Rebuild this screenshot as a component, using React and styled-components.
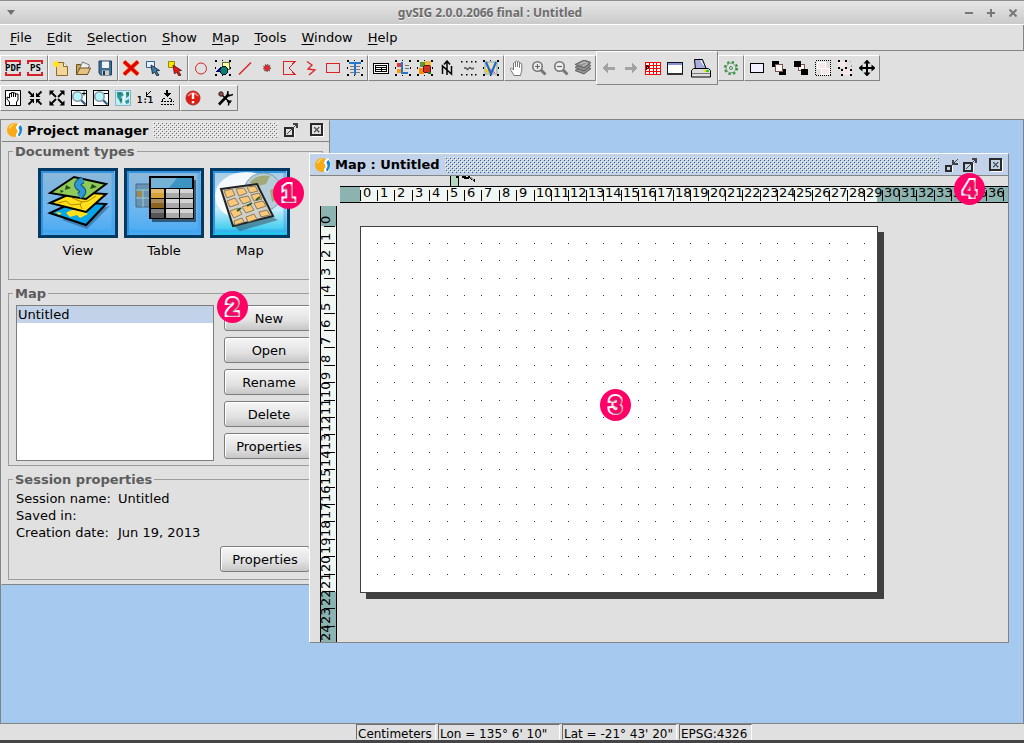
import React from "react";
import styled, { createGlobalStyle } from "styled-components";

const C = {
  face: "#e0e0e0",
  line: "#848484",
  desk: "#a6c9f0",
  select: "#c2d2e8",
  pink: "#ff0066",
  red: "#dc2222",
  teal: "#8db3b0",
  ruler: "#f1f6f2",
};

const Global = createGlobalStyle`
  * { box-sizing: border-box; }
  body {
    margin: 0;
    background: ${C.face};
    color: #000;
    font-family: "DejaVu Sans", Verdana, sans-serif;
    font-size: 13px;
    line-height: 17px;
  }
  button { font: inherit; color: inherit; }
`;

/* ---------- frame ---------- */
const Shell = styled.div`
  display: flex;
  flex-direction: column;
  min-height: 100vh;
  border-bottom: 3px solid #454548;
`;
const Caption = styled.header`
  display: flex;
  align-items: center;
  height: 25px;
  border-top: 1px solid #8f8c8c;
  border-bottom: 1px solid #fff;
  background: linear-gradient(#e6e6e6, #cacaca);
`;
const CaptionText = styled.h1`
  flex: 1;
  margin: 0;
  text-align: center;
  font: bold 12px/20px "Noto Sans", "Open Sans", sans-serif;
  color: #6c6c6c;
  text-shadow: 0 1px 0 #f2f2f2;
`;
const CaptionButton = styled.button`
  display: grid;
  place-items: center;
  width: 22px;
  height: 22px;
  padding: 0;
  border: 0;
  background: none;
`;
const CaptionButtons = styled.div`
  display: flex;
`;
const MenuBar = styled.nav`
  display: flex;
  height: 26px;
  padding: 0 2px;
  border-right: 1px solid ${C.line};
  border-bottom: 1px solid ${C.line};
`;
const MenuItem = styled.button`
  padding: 0 7px 0 8px;
  border: 0;
  background: none;
  line-height: 24px;
`;
const Mnemonic = styled.span`
  text-decoration: underline;
  text-underline-offset: 2px;
  text-decoration-thickness: 1px;
`;
const ToolRow = styled.div`
  display: flex;
  align-items: center;
  margin-bottom: ${(p) => (p.$last ? "8px" : "0")};
`;
const ToolGroup = styled.div`
  display: flex;
  align-items: center;
  height: ${(p) => (p.$tall ? "34px" : "26px")};
  padding: 1px;
  border: 1px solid;
  border-color: #fff ${C.line} ${C.line} #fff;
`;
const ToolButton = styled.button`
  display: grid;
  place-items: center;
  width: ${(p) => (p.$wide ? "30px" : "22px")};
  height: 22px;
  padding: 0;
  border: 0;
  background: none;
`;
const ToolGap = styled.span`
  width: 10px;
`;

/* ---------- desktop ---------- */
const Desktop = styled.main`
  position: relative;
  flex: 1;
  min-height: 604px;
  overflow: hidden;
  border-top: 1px solid ${C.line};
  border-left: 1px solid ${C.line};
  border-right: 1px solid ${C.line};
  background: ${C.desk};
`;
const Frame = styled.section`
  position: absolute;
  display: flex;
  flex-direction: column;
  overflow: hidden;
  border: 1px solid;
  border-color: ${(p) => (p.$active ? "#fff" : C.face)} ${C.line} ${C.line} ${(p) => (p.$active ? "#fff" : C.face)};
  background: ${C.face};
`;
const ManagerFrame = styled(Frame)`
  left: 0;
  top: 0;
  width: 329px;
  height: 465px;
`;
const MapFrame = styled(Frame)`
  left: 308px;
  top: 33px;
  width: 700px;
  height: 490px;
`;
const FrameBar = styled.header`
  display: flex;
  flex: none;
  align-items: center;
  gap: 4px;
  height: ${(p) => (p.$active ? "22px" : "21px")};
  padding: ${(p) => (p.$active ? "0 5px" : "0 5px 2px")};
  border-bottom: 1px solid ${C.line};
  background: ${(p) => (p.$active ? C.select : C.face)};
`;
const FrameTitle = styled.h2`
  margin: 0;
  font-size: 13px;
  line-height: 17px;
  white-space: nowrap;
`;
const dot = (c) => `conic-gradient(at 1px 1px, transparent 75%, ${c} 0)`;
const Bumps = styled.span`
  flex: 1;
  height: 16px;
  margin: 0 2px 0 1px;
  background-image: ${dot("#fff")}, ${dot("#fff")}, ${(p) => dot(p.$active ? "#44586f" : "#6e6e6e")},
    ${(p) => dot(p.$active ? "#44586f" : "#6e6e6e")};
  background-size: 4px 4px;
  background-position: 0 0, 2px 2px, 1px 1px, 3px 3px;
`;
const FrameButton = styled.button`
  display: block;
  width: 14px;
  height: 14px;
  margin-left: ${(p) => (p.$apart ? "8px" : "0")};
  padding: 0;
  border: 0;
  background: none;
  svg { display: block; }
`;

/* ---------- project manager ---------- */
const ManagerBody = styled.div`
  display: flex;
  flex-direction: column;
  gap: 5px;
  padding: 1px 6px 5px;
`;
const Group = styled.fieldset`
  min-width: 0;
  height: ${(p) => (p.$short ? "109px" : p.$tall ? "181px" : "137px")};
  margin: 0;
  padding: ${(p) => (p.$short ? "2px 7px" : p.$tall ? "3px 7px" : "8px 7px")};
  border: 1px solid #9c9c9c;
`;
const Legend = styled.legend`
  margin-left: -3px;
  padding: 0 2px;
  font-weight: bold;
  color: #5c5c5c;
  line-height: 17px;
`;
const DocTypes = styled.div`
  display: flex;
  gap: 6px;
  padding-left: 22px;
`;
const DocButton = styled.button`
  display: flex;
  flex-direction: column;
  align-items: center;
  gap: 4px;
  width: 80px;
  padding: 0;
  border: 0;
  background: none;
  svg { display: block; }
`;
const MapGroup = styled.div`
  display: flex;
  gap: 10px;
`;
const DocList = styled.ul`
  flex: none;
  width: 198px;
  height: 156px;
  margin: 0;
  padding: 0;
  border: 1px solid #7d7d7d;
  background: #fff;
  list-style: none;
`;
const DocItem = styled.li`
  padding: 0 1px;
  background: ${C.select};
`;
const ButtonColumn = styled.div`
  display: flex;
  flex-direction: column;
  gap: 6px;
`;
const PushButton = styled.button`
  width: 90px;
  height: 26px;
  padding: 0;
  border: 1px solid #7d7d7d;
  border-radius: 3px;
  background: linear-gradient(#f6f6f6, #e2e2e2 60%, #c6c6c6);
  box-shadow: inset 1px 1px 0 #fff;
`;
const Facts = styled.dl`
  display: grid;
  grid-template-columns: 102px 1fr;
  margin: 0;
`;
const Term = styled.dt`
  margin: 0;
`;
const Fact = styled.dd`
  margin: 0;
`;
const SessionActions = styled.div`
  display: flex;
  justify-content: flex-end;
  padding: 5px 5px 0;
`;

/* ---------- map layout ---------- */
const MapBody = styled.div`
  display: flex;
  flex: 1;
  flex-direction: column;
  min-height: 0;
`;
const CursorStrip = styled.div`
  flex: none;
  height: 10px;
  padding-left: 140px;
  svg { display: block; }
`;
const TopRuler = styled.svg`
  display: block;
  flex: none;
  width: calc(100% - 30px);
  height: 17px;
  margin-left: 30px;
`;
const Work = styled.div`
  display: flex;
  flex: 1;
  min-height: 0;
`;
const SideRuler = styled.svg`
  display: block;
  flex: none;
  width: 17px;
  height: calc(100% - 3px);
  margin: 3px 0 0 10px;
  overflow: visible;
`;
const Paper = styled.div`
  flex: none;
  width: 518px;
  height: 367px;
  margin: 23px;
  border: 1px solid #404040;
  background: #fff;
  box-shadow: 6px 6px 0 #404040;
  svg { display: block; }
`;

/* ---------- callouts ---------- */
const Callout = styled.span`
  position: absolute;
  left: ${(p) => p.$x}px;
  top: ${(p) => p.$y}px;
  width: 31px;
  height: 32px;
  border-radius: 50%;
  background: ${C.pink};
  color: ${C.pink};
  text-align: center;
  font: bold 23px/32px "Liberation Sans", Arial, sans-serif;
  -webkit-text-stroke: 4px #fff;
  paint-order: stroke fill;
  text-shadow: 1px 1px 2px #a0004a;
`;

/* ---------- status bar ---------- */
const StatusBar = styled.footer`
  display: flex;
  gap: 2px;
  height: 17px;
  padding-left: 356px;
  border-top: 1px solid ${C.line};
`;
const Status = styled.span`
  width: ${(p) => p.$w}px;
  border: 1px solid;
  border-color: #6f6f6f #fff transparent #6f6f6f;
  padding-left: 1px;
  line-height: 18px;
  font-size: 12px;
  white-space: nowrap;
`;

/* ---------- icons ---------- */
const Icon = ({ w = 16, h = 16, smooth, children }) => (
  <svg width={w} height={h} viewBox={`0 0 ${w} ${h}`} fill="none" shapeRendering={smooth ? "auto" : "crispEdges"} aria-hidden="true">
    {children}
  </svg>
);
const Handles = ({ c = "#000" }) => (
  <path fill={c} d="M0 0h2v2H0zM7 0h1v1H7zM14 0h2v2h-2zM0 7h1v2H0zM15 7h1v2h-1zM0 14h2v2H0zM7 15h1v1H7zM14 14h2v2h-2z" />
);
const smallText = { fontFamily: '"DejaVu Sans Mono", monospace', fontWeight: "bold", fontSize: 9 };
const Lens = ({ sign, boxed }) => (
  <>
    {boxed && <rect x=".5" y=".5" width="15" height="15" fill="#fff" stroke="#000" />}
    <path d="M9.500 9.500L14.500 14.500" stroke={boxed ? "#3a5f8c" : "#777"} strokeWidth={boxed ? "2.400" : "3"} />
    <circle cx="6.500" cy="6.500" r="4.700" fill={boxed ? "#b4f4fa" : "#eee"} stroke={boxed ? "#8a9aa8" : "#777"} strokeWidth="1.600" />
    {boxed ? (
      <path d={sign === "in" ? "M11 3.500h4M13 1.500v4" : "M11 3.500h4"} stroke="#000" />
    ) : (
      <path d={sign === "in" ? "M4 6.500h5M6.500 4v5" : "M4 6.500h5"} stroke="#666" strokeWidth="1.200" />
    )}
  </>
);
const handPath = "M5 15.500L1.500 9.500Q1 8 2.500 8L4.500 10V3Q5.500 1.500 6.500 3V7V1.500Q7.500 .2 8.500 1.500V7V2Q9.500 .8 10.500 2V7.500V3.500Q12 2.300 12.800 4V10L11.500 15.500z";
const Arrow = ({ fill, stroke = "#234" }) => <path d="M6 5L14.500 10.500L11 11L14 15L12 16L9.500 12L7.500 14z" fill={fill} stroke={stroke} />;

const icons = {
  pdf: <Icon><path d="M1 4V1h14v3M1 12v3h14v-3" stroke="#d8202a" strokeWidth="2" /><text x="0" y="11" fill="#000" {...smallText}>PDF</text></Icon>,
  ps: <Icon><path d="M1 4V1h14v3M1 12v3h14v-3" stroke="#d8202a" strokeWidth="2" /><text x="3" y="11" fill="#000" {...smallText}>PS</text></Icon>,
  fresh: <Icon smooth><path d="M3.500 2.500h7l4 4v9h-11z" fill="#f2d59a" stroke="#8a6a2a" /><path d="M10.500 2.500v4h4" fill="#fff" stroke="#8a6a2a" /><path d="M3 0l1 2 2-1-1 2 2 1-2 1 1 2-2-1-1 2-1-2-2 1 1-2-2-1 2-1-1-2 2 1z" fill="#ffe51a" /></Icon>,
  open: <Icon smooth><path d="M1.500 14.500V4.500h4l1 2h6v8z" fill="#c9a45c" stroke="#6e5320" /><path d="M4 10L7.500 2l7 3-2.500 6z" fill="#eee" stroke="#777" /><path d="M1.500 14.500L5 8h10.500l-3 6.500z" fill="#e4c284" stroke="#6e5320" /></Icon>,
  save: <Icon smooth><path d="M2 1h12.500v14H3.500L2 13z" fill="#3f6f94" stroke="#23415c" /><path d="M5 1.500h7V8H5z" fill="#f4f4f4" /><path d="M5 10.500h7V15H5z" fill="#ccc" /><path d="M6 11h2v4H6z" fill="#234" /></Icon>,
  cross: <Icon smooth><path d="M1 1.500L15 14.500M15 1.500L1 14.500" stroke="#ff5a00" strokeWidth="4.200" /><path d="M1 1.500L15 14.500M15 1.500L1 14.500" stroke="#e00000" strokeWidth="3" /></Icon>,
  pick: <Icon smooth><path d="M1.500 1.500h8v6h-8z" fill="#eef" stroke="#27648c" /><Arrow fill="#3a7ca6" /></Icon>,
  pickRed: <Icon smooth><path d="M1.500 1.500h6v6h-6z" fill="#ffe600" stroke="#8a8a00" /><Arrow fill="#e11" stroke="#622" /></Icon>,
  circle: <Icon smooth><circle cx="8" cy="8.500" r="5.500" stroke={C.red} /></Icon>,
  graphics: <Icon><Handles /><path d="M7 2h7v7H7z" fill="#ffffa0" stroke="#663" /><path d="M0 12l6-6 3 6z" fill="#008" /><circle cx="9" cy="10.500" r="4" fill="#088070" stroke="#013" /></Icon>,
  line: <Icon smooth><path d="M2 14.500L14 2.500" stroke={C.red} strokeWidth="1.500" /></Icon>,
  point: <Icon smooth><circle cx="8" cy="8" r="3" fill="#e02a2a" stroke="#555" strokeDasharray="1 1" strokeWidth="2" /><circle cx="8" cy="8" r="2.500" fill="#e02a2a" /></Icon>,
  polygon: <Icon><path d="M2.500 1.500h11.500L8 8l6 6.500H2.500z" stroke={C.red} /></Icon>,
  polyline: <Icon smooth><path d="M4 1.500l5 3.500-4 4 7 1-6 5" stroke={C.red} strokeWidth="1.300" /></Icon>,
  rect: <Icon><path d="M1.500 3.500h13v9h-13z" stroke={C.red} /></Icon>,
  text: <Icon><path d="M3 6.500h10M3 9.500h10M3 12.500h10" stroke="#777" /><path d="M2 3h12M8 3v12" stroke="#2277cc" strokeWidth="2" /><Handles /></Icon>,
  tableBox: <Icon><path d="M.5 3.500h15v10H.5z" fill="#fff" stroke="#000" /><path d="M2 5.500h12M2 7.500h12M2 9.500h12M2 11.500h12M8.500 7v5M2.500 5v7M13.500 5v7" stroke="#000" /></Icon>,
  legend: <Icon><Handles /><path d="M2 3h4v4H2z" fill="#e33" /><path d="M2 9h4v4H2z" fill="#f90" /><path d="M10 5h4M10 8h4" stroke="#777" /><path d="M7 2v11h6" stroke="#2277cc" strokeWidth="2" /></Icon>,
  picture: <Icon><path d="M2 8h5v6H2z" fill="#f80" /><path d="M3 2h5v5H3z" fill="#5a9a30" /><path d="M8 1h6v6H8z" fill="#f6b73c" /><circle cx="10" cy="9" r="4" fill="#c32" stroke="#611" /><path d="M11 12h3v2h-3z" fill="#272" /><Handles /></Icon>,
  north: <Icon smooth><path d="M3.500 14V6l9 8V6M8 15V1M5 4.500L8 1l3 3.500" stroke="#000" strokeWidth="1.500" /></Icon>,
  scale: <Icon smooth><path d="M3 8h2l1.500 1.500L9 7.500l2 1.500 2-1" stroke="#555" strokeWidth="1.400" /><path fill="#000" d="M0 1h1.500v1.500H0zM5 1h1.500v1.500H5zM10 1h1.500v1.500H10zM14 1h1.500v1.500H14zM0 14h1.500v1.500H0zM5 14h1.500v1.500H5zM10 14h1.500v1.500H10zM14 14h1.500v1.500H14z" /></Icon>,
  view: <Icon smooth><path d="M2 2h12v12H2z" fill="#e8dcc0" stroke="#8aa" /><path d="M3 12l4-3 5 4" stroke="#d4d" /><path d="M2 9l4 4" stroke="#fc0" strokeWidth="2" /><path d="M3 2l5 12 5-12" stroke="#1468c8" strokeWidth="2" /><Handles /></Icon>,
  hand: <Icon smooth><path d={handPath} fill="#fff" stroke="#777" /></Icon>,
  zoomIn: <Icon smooth><Lens sign="in" /></Icon>,
  zoomOut: <Icon smooth><Lens sign="out" /></Icon>,
  layers: <Icon smooth>{[7, 4, 1].map((y) => <path key={y} d={`M0 ${y + 3.5}L9 ${y - 1}L16 ${y + 1.5}L9 ${y + 7}z`} fill="#929292" stroke="#5e5e5e" />)}<path d="M5 4l5-2 2 2-4 2" stroke="#ccc" /></Icon>,
  back: <Icon><path d="M1 8l6-5v3.500h7v3H7V13z" fill="#a2a2a2" /></Icon>,
  forward: <Icon><path d="M15 8L9 3v3.500H2v3h7V13z" fill="#a2a2a2" /></Icon>,
  grid: <Icon><path d="M0 2h16v13H0z" fill="#f00" /><path d="M1 3h3v2H1zM5 3h3v2H5zM9 3h2v2H9zM12 3h3v2h-3zM1 6h3v2H1zM5 6h3v2H5zM9 6h2v2H9zM12 6h3v2h-3zM1 9h3v2H1zM5 9h3v2H5zM9 9h2v2H9zM12 9h3v2h-3zM1 12h3v2H1zM5 12h3v2H5zM9 12h2v2H9zM12 12h3v2h-3z" fill="#fff" /><path d="M1 5l3 2-3 3z" fill="#f80" stroke="#200" /></Icon>,
  pane: <Icon><path d="M.5 2.500h15v12H.5z" fill="#fff" stroke="#111" /><path d="M1 3h14v2H1z" fill="#8a93d8" /><path d="M0 14h16" stroke="#333" strokeWidth="2" /></Icon>,
  print: <Icon w={20} h={20} smooth><path d="M4.500 11.500L3.500 1.500h8l4 10z" fill="#a9aee0" stroke="#000" /><path d="M10 2l1 3 2 2" stroke="#fff" /><path d="M2.500 10.500h15l2 2v6.500H.5v-6.500z" fill="#ddd" stroke="#000" /><path d="M1 15.500h18" stroke="#777" /><path d="M13 12h2v2h-2z" fill="#fd0" /><path d="M15 12h3v2h-3z" fill="#3c3" /></Icon>,
  gear: <Icon smooth><circle cx="8" cy="8" r="6" stroke="#3f8f4a" strokeWidth="2.200" strokeDasharray="2.400 2.312" /><circle cx="8" cy="8" r="4.800" fill="#e0e0e0" stroke="#3f8f4a" strokeDasharray="2 .6" /><circle cx="8" cy="8" r="1.500" stroke="#3f8f4a" /></Icon>,
  plain: <Icon><path d="M1.500 3.500h13v9h-13z" fill="#f2f2ff" stroke="#000" /></Icon>,
  front: <Icon><path d="M1 1h7v6H1zM8 9h7v6H8z" fill="#000" /><path d="M4.500 4.500h7v7h-7z" fill="#fff5f0" stroke="#755" /></Icon>,
  behind: <Icon><path d="M5.500 4.500h6v6h-6z" fill="#fff5f0" stroke="#755" /><path d="M1 1h7v6H1zM8 9h7v6H8z" fill="#000" /></Icon>,
  group: <Icon><path d="M.5 .5h15v15H.5z" stroke="#000" strokeDasharray="1 1" /><path d="M2 2h8v6H2zM6 8h8v6H6z" fill="#f6e6e6" stroke="#fff" /></Icon>,
  ungroup: <Icon><path d="M1 1h8v6H1zM5 9h9v6H5z" fill="#f6e6e6" /><path d="M1 0h2v2H1zM8 0h2v2H8zM1 7h2v2H1zM8 7h2v2H8zM4 9h2v2H4zM13 9h2v2h-2zM4 14h2v2H4zM13 14h2v2h-2z" fill="#000" /><path d="M13 1v1M14 5v2" stroke="#999" /></Icon>,
  move: <Icon smooth><path d="M8 1v14M1 8h14" stroke="#000" strokeWidth="2" /><path d="M8-.5l3.500 4h-7zM8 16.500l3.500-4h-7zM-.5 8l4-3.500v7zM16.500 8l-4-3.500v7z" fill="#000" /></Icon>,
  pan: <Icon smooth><path d="M.5 .5h15v15H.5z" fill="#fff" stroke="#000" /><path d="M4.500 15V12L2 9V7l2.500 1V3.500h2V7M6.500 6V2.500h2V7M8.500 3h2v4M10.500 4h2.500v6l-1.500 2v3" stroke="#000" /></Icon>,
  shrink: <Icon smooth><path d="M1.500 1.500l4 4M14.500 1.500l-4 4M1.500 14.500l4-4M14.500 14.500l-4-4" stroke="#000" strokeWidth="1.800" /><path d="M7 7V2.500L2.500 7zM9 7h4.500L9 2.500zM7 9H2.500L7 13.500zM9 9v4.500L13.500 9z" fill="#000" /></Icon>,
  extend: <Icon smooth><path d="M2 2l5 5M14 2L9 7M2 14l5-5M14 14L9 9" stroke="#000" strokeWidth="1.800" /><path d="M.5 .5h5l-5 5zM15.500 .5v5l-5-5zM.5 15.500v-5l5 5zM15.500 15.500h-5l5-5z" fill="#000" /></Icon>,
  boxIn: <Icon smooth><Lens boxed sign="in" /></Icon>,
  boxOut: <Icon smooth><Lens boxed sign="out" /></Icon>,
  world: <Icon smooth><path d="M.5 .5h15v15H.5z" fill="#c4ecf6" stroke="#8ab4c0" /><path d="M2 2h5l2 3-3 2 2 3-2 4-2-4-2-3zM11 2h3v4l-3 2zM10 11l4-2v4l-3 1z" fill="#2a9aa0" /><path d="M4 3h2v2H4zM12 3h2v2h-2zM5 9h2v2H5z" fill="#2c7a3e" /><path d="M9 2l1 4-2 4 2 4" stroke="#fff" strokeWidth="1.500" /></Icon>,
  one: <Icon><text x="0" y="13" fill="#000" {...smallText}>1:1</text><path d="M9.500 2v4h4M10 5l4-4" stroke="#000" /></Icon>,
  fit: <Icon><path d="M8 0v4" stroke="#000" strokeWidth="2" /><path d="M4 3h8L8 7z" fill="#000" /><path d="M1.500 14.500h13M1.500 11.500h13M3.500 8.500v3M12.500 8.500v3M4 8.500h2M10 8.500h2" stroke="#000" strokeDasharray="2 1" /></Icon>,
  alert: <Icon smooth><circle cx="8" cy="8" r="7" fill="#e21b12" stroke="#a33" /><path d="M3 6q5-6 10 0" stroke="#ff8a80" strokeWidth="1.500" /><path d="M8 3v6M8 11v2.200" stroke="#fff" strokeWidth="2.400" /></Icon>,
  tools: <Icon smooth><path d="M2 14.500L12 4" stroke="#000" strokeWidth="2.600" /><path d="M5 5l8.500 8" stroke="#000" strokeWidth="1.600" /><path d="M11 1l-.5 3.500L12 6l4-1.500M10 11.500l4.500-.5M11.500 15.500l.5-5" stroke="#000" strokeWidth="1.500" /><circle cx="4" cy="4" r="2.200" fill="#a44" stroke="#222" /></Icon>,
};

const Tool = ({ id, wide }) => (
  <ToolButton type="button" $wide={wide} aria-label={id}>
    {icons[id]}
  </ToolButton>
);
const toolbars = [
  ["pdf", "ps"],
  ["fresh", "open", "save"],
  ["cross", "pick", "pickRed"],
  ["circle", "graphics", "line", "point", "polygon", "polyline", "rect", "text"],
  ["tableBox", "legend", "picture", "north", "scale", "view"],
  ["hand", "zoomIn", "zoomOut", "layers"],
  ["back", "forward", "grid", "pane", "print"],
  ["gear"],
  ["plain", "front", "behind", "group", "ungroup", "move"],
];
const navTools = ["pan", "shrink", "extend", "boxIn", "boxOut", "world", "one", "fit"];

const Logo = () => (
  <Icon smooth>
    <circle cx="7" cy="8" r="7" fill="#f9ab17" />
    <path d="M2 5q3-4 6-3q-3 1-5 5z" fill="#ffd56a" />
    <path d="M13 1Q18 6 13 15.500Q7.500 15 9.500 11.500Q12 9 9 6.500Q9 3 13 1z" fill="#fff" />
    <path d="M13.500 3Q17.500 7 12.500 14.500Q10.500 14 11.500 11.500Q13.500 9 11.500 6Q11.500 4 13.500 3z" fill="#1686d6" />
  </Icon>
);
const CloseGlyph = () => (
  <Icon w={14} h={14}>
    <path d="M2 13.500h11.500V2" stroke="#fff" />
    <path d="M1 1h11v11H1z" stroke="#2a2a2a" strokeWidth="2" />
    <path d="M4 4h1v1h1v1h1v-1h1v-1h1v1h-1v1h-1v1h1v1h1v1h-1v-1h-1v-1h-1v1h-1v1h-1v-1h1v-1h1v-1h-1v-1h-1z" fill="#222" stroke="#555" strokeWidth=".5" />
  </Icon>
);
const MaxGlyph = () => (
  <Icon w={14} h={14}>
    <path d="M10.500 6v8H1" stroke="#fff" />
    <path d="M1 5h8v8H1z" stroke="#2a2a2a" strokeWidth="2" />
    <path d="M3 11l9-9" stroke="#444" strokeWidth="1.200" />
    <path d="M9 1h4v4" stroke="#444" strokeWidth="2" />
  </Icon>
);
const MinGlyph = () => (
  <Icon w={14} h={14}>
    <path d="M7.500 8v6H1" stroke="#fff" />
    <path d="M1 8h5v5H1z" stroke="#2a2a2a" strokeWidth="2" />
    <path d="M13 1L8 6" stroke="#444" strokeWidth="1.200" />
    <path d="M8 2v4h5" stroke="#444" strokeWidth="2" />
  </Icon>
);

/* ---------- document type pictures ---------- */
const Tile = ({ id, from, mid, to, children }) => (
  <svg width="80" height="70" viewBox="0 0 80 70" aria-hidden="true">
    <defs>
      <linearGradient id={id} x1="0" y1="0" x2="0" y2="1">
        <stop offset="0" stopColor={from} />
        <stop offset=".6" stopColor={mid} />
        <stop offset="1" stopColor={to} />
      </linearGradient>
    </defs>
    <path d="M0 0h80v70H0z" fill="#003a63" />
    <path d="M3 3h74v64H3z" fill={`url(#${id})`} />
    <path d="M4 66V4h72" fill="none" stroke="#2f93e0" strokeWidth="2" />
    <path d="M5 63h70V5" fill="none" stroke="#3aa0ee" strokeWidth="3" opacity=".5" />
    {children}
  </svg>
);
const ViewArt = () => (
  <Tile id="tile-view" from="#8db8d8" mid="#6db6ee" to="#48aaf4">
    <path d="M24 52l26-9 22-5-23 23z" fill="#2b5f8c" opacity=".6" />
    <path d="M12 45l24-11 32 2-20 21z" fill="#06a6e8" stroke="#000" strokeWidth="2" />
    <path d="M28 45q6-5 16-3l6 4-8 4-3-3-7 2zM18 44l6 1-3 2z" fill="#ffe11a" />
    <path d="M12 35l24-11 32 2-20 18z" fill="#ffe11a" stroke="#000" strokeWidth="2" />
    <path d="M20 35l8-2 5 4 9-1 2 5M34 30l10 4 6-1 8-5M44 33l-2 4" fill="none" stroke="#b98700" />
    <path d="M12 25L36 9l32 7-20 15z" fill="#8fcb58" stroke="#000" strokeWidth="2" />
    <path d="M45 12q-9 4-3 8t-1 8" fill="none" stroke="#1b4e7a" strokeWidth="7" />
    <path d="M45 12q-9 4-3 8t-1 8" fill="none" stroke="#2e9ad4" strokeWidth="5" />
    <path d="M28 17l5 3-6 2zM54 16l5 3-7 2zM22 22l4 1-3 2z" fill="#234d1c" />
  </Tile>
);
const cols = [26, 41, 55];
const TableArt = () => (
  <Tile id="tile-table" from="#8db8d8" mid="#6db6ee" to="#48aaf4">
    <path d="M12 16h20v23H12z" fill="#6a93b2" stroke="#47698a" />
    <path d="M12 22h20M12 30h20M19 22v17" stroke="#9cc" />
    <path d="M13 23h5v6h-5z" fill="#a48a4a" />
    <path d="M28 12h44v42H28z" fill="#234" opacity=".7" />
    <path d="M25 8h45v43H25z" fill="#000" />
    <path d="M27 10h41v10H27z" fill="#3c93c4" />
    <path d="M27 10h26l-8 10H27z" fill="#8cc0dc" opacity=".7" />
    {[21, 31, 41].map((y, r) =>
      cols.map((x, c) => (
        <React.Fragment key={x + "-" + y}>
          <path d={`M${x + 1} ${y}h13v9h-13z`} fill={c ? "#a9a9a9" : ["#d8a23a", "#8a6420", "#555"][r]} />
          <path d={`M${x + 1} ${y}h13v4h-13z`} fill="#fff" opacity={c ? ".5" : ".25"} />
        </React.Fragment>
      ))
    )}
  </Tile>
);
const MapArt = () => (
  <Tile id="tile-map" from="#a6cbe4" mid="#c6ecfa" to="#18c4ea">
    <ellipse cx="36" cy="28" rx="31" ry="24" fill="#fff" opacity=".85" />
    <circle cx="53" cy="24" r="19" fill="#b4cdd8" stroke="#7e99a6" />
    <path d="M40 14q8-8 20-6l-4 8-8 2-3 5zM60 22l8-3v12l-6 3z" fill="#a3a878" />
    <path d="M24 58l36-10 8 4-38 11z" fill="#345" opacity=".5" />
    <path d="M11 21l36-5 16 32-40 10z" fill="#cfd0cc" stroke="#222" strokeWidth="2" />
    {[
      "M14 23l8-2 3 6-8 3z", "M26 21l8-1 3 5-8 3z", "M37 19l8-1 3 5-8 2z",
      "M17 33l8-3 4 6-9 3z", "M29 30l9-2 3 5-8 3z", "M41 27l8-2 3 6-8 2z",
      "M20 43l8-3 4 6-8 4z", "M32 39l8-3 4 6-8 3z", "M44 35l9-2 3 5-9 3z",
      "M24 53l8-3 2 4-9 3z", "M36 49l8-3 3 5-9 3z", "M49 44l8-2 3 5-9 2z",
    ].map((d) => <path key={d} d={d} fill="#fac878" stroke="#8c7a5a" />)}
    <path d="M27 43l4-3M37 38l5-3M46 32l4-3" stroke="#2d5a25" strokeWidth="2" />
  </Tile>
);

/* ---------- rulers and dot grid ---------- */
const STEP = 17.4;
const at = (i) => Math.floor(i * STEP);
const range = (n) => Array.from({ length: n }, (_, i) => i);

const HorizontalRuler = () => (
  <TopRuler shapeRendering="crispEdges">
    <rect width="100%" height="17" fill={C.teal} />
    <rect x="20" width="517" height="17" fill={C.ruler} />
    <rect width="100%" height="1" />
    <rect y="16" width="100%" height="1" />
    {range(38).map((i) => (
      <React.Fragment key={i}>
        <rect x={20 + at(i)} y="4" width="1" height="11" />
        {i < 37 && <text x={(i < 10 ? 23 : 22) + at(i)} y="11">{i}</text>}
      </React.Fragment>
    ))}
  </TopRuler>
);
const VerticalRuler = () => (
  <SideRuler shapeRendering="crispEdges">
    <rect width="17" height="100%" fill={C.teal} />
    <rect y="20" width="17" height="366" fill={C.ruler} />
    <rect width="1" height="100%" />
    <rect x="16" width="1" height="100%" />
    {range(25).map((i) => (
      <React.Fragment key={i}>
        <rect x="4" y={20 + at(i)} width="11" height="1" />
        <text transform={`translate(10 ${18 + at(i)}) rotate(-90)`}>{i}</text>
      </React.Fragment>
    ))}
  </SideRuler>
);
const DotGrid = () => (
  <svg width="516" height="365" shapeRendering="crispEdges" aria-hidden="true">
    <path
      fill="#333"
      d={range(29)
        .map((c) => range(20).map((r) => `M${at(c + 1) - 1} ${at(r + 1) - 1}h1v1h-1z`).join(""))
        .join("")}
    />
  </svg>
);

const menus = ["File", "Edit", "Selection", "Show", "Map", "Tools", "Window", "Help"];

export default function App() {
  return (
    <Shell>
      <Global />
      <Caption>
        <CaptionButton type="button" aria-label="Window menu">
          <Icon w={8} h={5} smooth><path d="M0 0h8L4 5z" fill="#707070" /></Icon>
        </CaptionButton>
        <CaptionText>gvSIG 2.0.0.2066 final : Untitled</CaptionText>
        <CaptionButtons>
          <CaptionButton type="button" aria-label="Minimize"><Icon w={8} h={8}><path d="M0 4h8" stroke="#777" strokeWidth="2" /></Icon></CaptionButton>
          <CaptionButton type="button" aria-label="Maximize"><Icon w={8} h={8}><path d="M0 4h8M4 0v8" stroke="#777" strokeWidth="2" /></Icon></CaptionButton>
          <CaptionButton type="button" aria-label="Close"><Icon w={8} h={8} smooth><path d="M.5 .5l7 7M7.500 .5l-7 7" stroke="#777" strokeWidth="2" /></Icon></CaptionButton>
        </CaptionButtons>
      </Caption>
      <MenuBar>
        {menus.map((m) => (
          <MenuItem type="button" key={m}><Mnemonic>{m[0]}</Mnemonic>{m.slice(1)}</MenuItem>
        ))}
      </MenuBar>
      <ToolRow>
        {toolbars.map((ids) => (
          <ToolGroup key={ids[0]} $tall={ids.includes("print")}>
            {ids.map((id) => <Tool key={id} id={id} wide={id === "print"} />)}
          </ToolGroup>
        ))}
      </ToolRow>
      <ToolRow $last>
        <ToolGroup>{navTools.map((id) => <Tool key={id} id={id} />)}</ToolGroup>
        <ToolGroup><Tool id="alert" /><ToolGap /><Tool id="tools" /></ToolGroup>
      </ToolRow>

      <Desktop>
        <ManagerFrame>
          <FrameBar>
            <Logo />
            <FrameTitle>Project manager</FrameTitle>
            <Bumps />
            <FrameButton type="button" aria-label="Maximize"><MaxGlyph /></FrameButton>
            <FrameButton type="button" $apart aria-label="Close"><CloseGlyph /></FrameButton>
          </FrameBar>
          <ManagerBody>
            <Group>
              <Legend>Document types</Legend>
              <DocTypes>
                <DocButton type="button"><ViewArt />View</DocButton>
                <DocButton type="button"><TableArt />Table</DocButton>
                <DocButton type="button"><MapArt />Map</DocButton>
              </DocTypes>
            </Group>
            <Group $tall>
              <Legend>Map</Legend>
              <MapGroup>
                <DocList role="listbox" aria-label="Map">
                  <DocItem role="option" aria-selected="true">Untitled</DocItem>
                </DocList>
                <ButtonColumn>
                  {["New", "Open", "Rename", "Delete", "Properties"].map((b) => (
                    <PushButton type="button" key={b}>{b}</PushButton>
                  ))}
                </ButtonColumn>
              </MapGroup>
            </Group>
            <Group $short>
              <Legend>Session properties</Legend>
              <Facts>
                <Term>Session name:</Term><Fact>Untitled</Fact>
                <Term>Saved in:</Term><Fact />
                <Term>Creation date:</Term><Fact>Jun 19, 2013</Fact>
              </Facts>
              <SessionActions><PushButton type="button">Properties</PushButton></SessionActions>
            </Group>
          </ManagerBody>
        </ManagerFrame>

        <MapFrame $active>
          <FrameBar $active>
            <Logo />
            <FrameTitle>Map : Untitled</FrameTitle>
            <Bumps $active />
            <FrameButton type="button" aria-label="Minimize"><MinGlyph /></FrameButton>
            <FrameButton type="button" aria-label="Maximize"><MaxGlyph /></FrameButton>
            <FrameButton type="button" $apart aria-label="Close"><CloseGlyph /></FrameButton>
          </FrameBar>
          <MapBody>
            <CursorStrip>
              <Icon w={28} h={10}>
                <path d="M1 0h7v10H1z" fill="#b6d8bc" />
                <path d="M.5 0v10M8.500 2v8" stroke="#000" />
                <path d="M6 0h3v2H6z" fill="#000" />
                <path d="M12 1h3v1h4M18 0l7 5" stroke="#000" strokeWidth="2" />
                <path d="M20 1l4 3" stroke="#999" />
              </Icon>
            </CursorStrip>
            <HorizontalRuler />
            <Work>
              <VerticalRuler />
              <Paper><DotGrid /></Paper>
            </Work>
          </MapBody>
        </MapFrame>

        <Callout $x={272} $y={57}>1</Callout>
        <Callout $x={216} $y={171}>2</Callout>
        <Callout $x={599} $y={269}>3</Callout>
        <Callout $x={953} $y={53}>4</Callout>
      </Desktop>

      <StatusBar>
        <Status $w={80}>Centimeters</Status>
        <Status $w={122}>Lon = 135° 6' 10"</Status>
        <Status $w={115}>Lat = -21° 43' 20"</Status>
        <Status $w={73}>EPSG:4326</Status>
      </StatusBar>
    </Shell>
  );
}
